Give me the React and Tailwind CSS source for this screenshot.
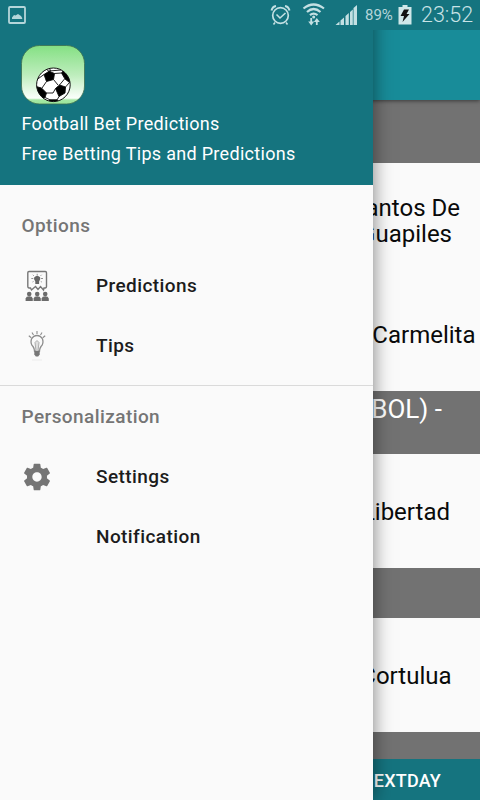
import React from 'react';

const gear = 'M19.43 12.98c.04-.32.07-.64.07-.98s-.03-.66-.07-.98l2.11-1.650c.19-.15.24-.42.12-.64l-2-3.460c-.12-.22-.39-.3-.61-.22l-2.490 1c-.52-.4-1.080-.73-1.690-.98l-.38-2.650C14.460 2.180 14.250 2 14 2h-4c-.25 0-.46.18-.49.42l-.38 2.650c-.61.25-1.170.59-1.690.98l-2.490-1c-.23-.09-.49 0-.61.22l-2 3.460c-.13.22-.07.49.12.64l2.110 1.650c-.04.32-.07.65-.07.98s.03.66.07.98l-2.110 1.650c-.19.15-.24.42-.12.64l2 3.460c.12.22.39.3.61.22l2.490-1c.52.4 1.080.73 1.690.98l.38 2.650c.03.24.24.42.49.42h4c.25 0 .46-.18.49-.42l.38-2.650c.61-.25 1.170-.59 1.690-.98l2.490 1c.23.09.49 0 .61-.22l2-3.460c.12-.22.07-.49-.12-.64l-2.110-1.650zM12 15.500c-1.930 0-3.500-1.570-3.500-3.500s1.570-3.500 3.500-3.500 3.500 1.570 3.500 3.500-1.570 3.500-3.500 3.500z';

function GalleryIcon() {
    return (
        <svg className="h-[18px] w-[18px]" viewBox="0 0 18 18" fill="none">
            <rect x="1" y="1" width="16" height="16" rx="1" stroke="#b5d6da" strokeWidth="1.8" />
            <path d="M4 13v-1.500l2-2.500 1.500.500L10 8l1.500 1L13 10l1.200 2v1z" fill="#b5d6da" />
        </svg>
    );
}

function StatusBar() {
    return (
        <div className="absolute inset-x-0 top-0 z-20 flex h-[30px] items-center bg-[#15747f] pl-2 text-[#c9e3e6]">
            <GalleryIcon />
            {/* alarm, wifi, signal */}
            <svg className="ml-[244px] h-[30px] w-[90px]" viewBox="270 0 90 30" fill="none" stroke="#c3e0e3">
                <circle cx="280.500" cy="15.500" r="7.800" strokeWidth="1.700" />
                <path d="M276.500 14.500l3.500 3.500 5.500-5M275 22.500l-1.500 2M286 22.500l1.500 2" strokeWidth="1.600" />
                <path d="M271.500 10.500q1-4 4.500-4.500M289.500 10.500q-1-4-4.500-4.500" strokeWidth="2" />
                <path d="M303.500 8.500q10-8 20.500 0M307 12q6.500-6 13.500 0M310 15.200q3.500-3 7.500 0" strokeWidth="2.200" />
                <circle cx="313.700" cy="17" r="1.500" fill="#c3e0e3" stroke="none" />
                <path d="M311.200 18v4M316.800 25v-4" strokeWidth="1.800" />
                <path d="M308.200 21.500h6l-3 4zM313.800 22h6l-3-4z" fill="#c3e0e3" stroke="none" />
                <path d="M335.500 25l4-3.500V25zM340.500 25v-4.500l3.500-3V25zM345.500 25v-9l3.300-3V25zM350 25V12l2.800-2.500V25zM353.500 25V8l3.500-3v20z" fill="#c3e0e3" stroke="none" />
            </svg>
            <span className="ml-[5px] w-[33px] text-[15px] text-[#b5d6da]">89%</span>
            <svg className="h-[30px] w-[14px]" viewBox="398 0 14 30">
                <path d="M398.500 7h4V5h5v2h4v17.500h-13z" fill="#d0e7e9" />
                <path d="M404 9.500h5l-2.500 4.500h3l-7 8 1.500-6h-3.500z" fill="#111" />
            </svg>
            <span className="ml-[9px] pt-[1px] text-[21.500px] font-light">23:52</span>
        </div>
    );
}

function AppLogo() {
    return (
        <svg className="h-[60px] w-[64px]" viewBox="21 45 64 60">
            <defs>
                <linearGradient id="logoFill" x1="0" y1="0" x2="0" y2="1">
                    <stop offset="0" stopColor="#84e083" />
                    <stop offset="0.500" stopColor="#bdedbc" />
                    <stop offset="0.900" stopColor="#fbfffb" />
                    <stop offset="0.930" stopColor="#a5e8a4" />
                    <stop offset="1" stopColor="#9be59a" />
                </linearGradient>
                <clipPath id="ballClip"><circle cx="53.400" cy="84.800" r="16.800" /></clipPath>
            </defs>
            <rect x="21.500" y="45.500" width="63" height="58.500" rx="18" fill="url(#logoFill)" stroke="#3c6f50" strokeWidth="0.800" />
            <circle cx="53.400" cy="84.800" r="16.800" fill="#fff" />
            <g clipPath="url(#ballClip)" stroke="#0a0a0a" strokeWidth="0.900">
                <path d="M44 74.500l5-3.200 5.500 2.200-1 6-7 2z" />
                <path d="M55.500 88.500l4-3.500 6 2-.5 6-6 3.500z" />
                <path d="M36 86.500l5.500 1.500 5 5-1.500 4.500-5 2z" />
                <path d="M61.500 73l3-4 6 8-1 5.500-4.500-3.500z" />
                <path d="M50 99.800h7l2 4H47z" />
                <path d="M46 69l3 2.300M49.500 67.500l1 4M54.500 73.500l7-.5M49 71l12-1M53.500 79.500l4.500 5.500M59.500 85l5-6M46.500 81.500l-4.500 6.500M55.500 88.500l-2.500 4.500h-6.500M65.500 87l4-4.500M59 96.500l-2 3.500M50 99.800l-5-2.300M37 79.500l7-5" fill="none" />
            </g>
            <circle cx="53.400" cy="84.800" r="16.800" fill="none" stroke="#111" strokeWidth="1" />
        </svg>
    );
}

function PredictionsIcon() {
    return (
        <svg className="h-[32px] w-[26px]" viewBox="24 269 26 32" fill="none" stroke="#777">
            <path d="M30.500 287h-1.500q-1.200-.3-1.200-1.500v-13.700q0-1.300 1.200-1.300h16.300q1.200 0 1.200 1.300v13.700q0 1.200-1.200 1.500h-1.300l-.5 2-3-3.500-2.500 3-2.500-3-4 3.500z" strokeWidth="1.400" />
            <path d="M35.300 280.500q-2.200-2-1-4.200 2.900-3 5.800 0 1 2.200-1 4.200v2.500h-3.800z" fill="#666" stroke="none" />
            <path d="M37.200 272.800v1.700M32.800 273.800l1 1M41.600 273.800l-1 1M31.300 277.500h2M43 277.500h-2M32.500 281l1-.5M41.800 281l-1-.5" strokeWidth="0.800" />
            {[29.200, 37.200, 45.200].map((x) => (
                <g key={x} fill="#6b6b6b" stroke="none">
                    <circle cx={x} cy="293" r="2.300" />
                    <path d={`M${x - 3.6} 300v-2.500q.5-2.200 3.600-2.200t3.600 2.200v2.500z`} />
                </g>
            ))}
        </svg>
    );
}

function TipsIcon() {
    return (
        <svg className="h-[32px] w-[26px]" viewBox="24 329 26 32" fill="none" stroke="#8c8c8c">
            <path d="M34.500 350q0-2.500-1.500-4.500-3-3-1.500-7.500 2-3.500 5.500-3.500t5.500 3.500q1.500 4.500-1.500 7.500-1.500 2-1.500 4.500z" strokeWidth="1.300" />
            <path d="M36 350l-1-8.500 2-2 2 2-1 8.500" fill="#dedede" stroke="#a5a5a5" strokeWidth="0.900" />
            <path d="M34.300 350h5.400v3.500l-1.500 2h-2.400l-1.500-2z" fill="#777" stroke="none" />
            <path d="M37 330v3M32 331.500l1.500 2.500M42 331.500l-1.500 2.500M28.800 334.800l2.500 2M45.200 334.800l-2.500 2" strokeWidth="1.100" />
            <path d="M32 359h10" stroke="#ececec" />
        </svg>
    );
}

function SettingsIcon() {
    return (
        <svg className="h-[32px] w-[32px]" viewBox="0 0 24 24">
            <path d={gear} fill="#757575" />
        </svg>
    );
}

const options = [
    { label: 'Predictions', icon: PredictionsIcon },
    { label: 'Tips', icon: TipsIcon },
];

const personal = [
    { label: 'Settings', icon: SettingsIcon },
    { label: 'Notification', icon: null },
];

function MenuRow({ label, icon: Icon }) {
    return (
        <li className="flex h-[60px] items-center">
            <span className="ml-[17px] flex w-10 justify-center">{Icon && <Icon />}</span>
            <span className="ml-[39px] text-[19px] font-medium tracking-[0.42px] text-[#1c1c1c]">{label}</span>
        </li>
    );
}

function Drawer() {
    return (
        <aside className="absolute inset-y-0 left-0 z-10 flex w-[373px] flex-col bg-[#fafafa] shadow-[0_0_18px_rgba(0,0,0,0.5)]">
            <header className="flex h-[185px] flex-col bg-[#15747f] pt-[45px] pl-[21px] text-[18px] leading-[30px] tracking-[0.3px] text-white">
                <AppLogo />
                <p className="mt-[4px] pl-[0.5px]">Football Bet Predictions</p>
                <p className="pl-[0.5px]">Free Betting Tips and Predictions</p>
            </header>
            <h2 className="mt-[11px] flex h-[60px] items-center pl-[21.5px] text-[19px] font-medium tracking-[0.42px] text-[#757575]">Options</h2>
            <ul>{options.map((o) => <MenuRow key={o.label} {...o} />)}</ul>
            <hr className="mt-[9px] border-[#dadada]" />
            <h2 className="mt-[1px] flex h-[60px] items-center pl-[21.5px] text-[19px] font-medium tracking-[0.42px] text-[#757575]">Personalization</h2>
            <ul>{personal.map((o) => <MenuRow key={o.label} {...o} />)}</ul>
        </aside>
    );
}

function MatchList() {
    return (
        <main className="flex h-full flex-col bg-[#fafafa] text-right text-[24px] text-[#0a0a0a]">
            <div className="h-[30px] shrink-0 bg-[#15747f]" />
            <div className="relative h-[70px] shrink-0 bg-[#188c99] shadow-[0_1px_4px_rgba(0,0,0,0.5)]" />
            <div className="h-[63px] shrink-0 bg-[#727272]" />
            <div className="h-[114px] shrink-0 pt-[32px] leading-[26px]">
                <p className="pr-[20px]">Santos De</p>
                <p className="pr-[28px]">Guapiles</p>
            </div>
            <div className="flex h-[114px] shrink-0 items-center justify-end pt-[2px] pr-[4.5px]">Carmelita</div>
            <div className="h-[63px] shrink-0 bg-[#727272] pr-[38px] text-[26px] leading-[36px] text-white">(FUTBOL) -</div>
            <div className="flex h-[114px] shrink-0 items-center justify-end pt-[2px] pr-[30px]">Libertad</div>
            <div className="h-[50px] shrink-0 bg-[#727272]" />
            <div className="flex h-[114px] shrink-0 items-center justify-end pt-[2px] pr-[28.5px]">Cortulua</div>
            <div className="h-[27px] shrink-0 bg-[#727272]" />
            <div className="flex h-[41px] shrink-0 items-center justify-end bg-[#15747f] pt-[2px] pr-[39px] text-[18px] font-medium tracking-[0.2px] text-white">NEXTDAY</div>
        </main>
    );
}

export default function App() {
    return (
        <div className="relative h-[800px] w-[480px] overflow-hidden font-[Roboto,sans-serif]">
            <MatchList />
            <Drawer />
            <StatusBar />
        </div>
    );
}
